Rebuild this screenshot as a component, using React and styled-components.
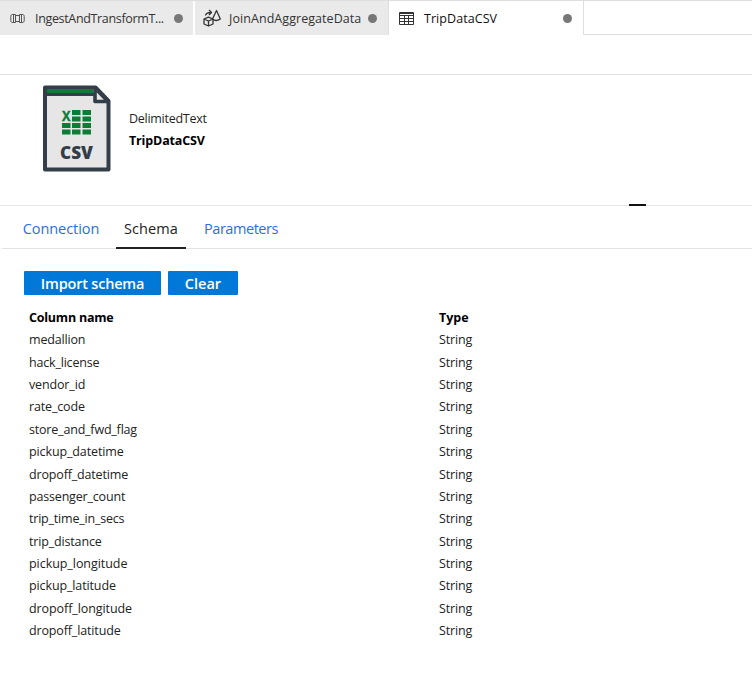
import React from 'react';
import styled, { createGlobalStyle } from 'styled-components';

const GlobalStyle = createGlobalStyle`
  * { box-sizing: border-box; }
  body { margin: 0; background: #fff; }
`;

const Page = styled.div`
  display: flex;
  flex-direction: column;
  width: 752px;
  height: 685px;
  overflow: hidden;
  background: #fff;
  color: #1f1f1f;
  font-family: 'Open Sans', 'Noto Sans', sans-serif;
  font-size: 12.5px;
`;

const Text = styled.span`
  letter-spacing: ${({ $tracking = 0 }) => $tracking}px;
  white-space: nowrap;
`;

const FileTabs = styled.header`
  display: flex;
  height: 35px;
  flex: none;
  border-top: 1px solid #dedede;
`;

const FileTab = styled.div`
  display: flex;
  align-items: center;
  flex: none;
  width: ${({ $width }) => $width}px;
  padding: 0 ${({ $end = 11 }) => $end}px 0 ${({ $inset }) => $inset}px;
  background: ${({ $active }) => ($active ? '#fff' : '#eaeaea')};
  color: ${({ $active }) => ($active ? '#111' : '#333')};
  border-right: ${({ $edge }) => $edge};
`;

const TabIcon = styled.svg`
  flex: none;
  width: ${({ $size }) => $size}px;
  height: ${({ $size }) => $size}px;
  margin-right: ${({ $gap }) => $gap}px;
  fill: none;
  stroke: #333;
`;

const Dot = styled.i`
  flex: none;
  width: 9px;
  height: 9px;
  margin-left: auto;
  border-radius: 50%;
  background: #777;
`;

const TabFiller = styled.div`
  flex: 1;
  border-bottom: 1px solid #dfdfdf;
`;

const Toolbar = styled.div`
  flex: none;
  height: 40px;
  border-bottom: 1px solid #e2e2e2;
`;

const Summary = styled.section`
  display: flex;
  flex: none;
  height: 131px;
  padding: 10px 0 0 42px;
  border-bottom: 1px solid #e6e6e6;
`;

const FileBadge = styled.svg`
  flex: none;
  width: 69px;
  height: 87px;
`;

const SummaryText = styled.div`
  display: flex;
  flex-direction: column;
  margin: 23px 0 0 18px;
  line-height: 22px;
`;

const DatasetName = styled(Text)`
  font-weight: 700;
  color: #000;
`;

const Handle = styled.div`
  align-self: flex-end;
  width: 17px;
  height: 2px;
  margin: 0 106px -1px auto;
  background: #111;
`;

const Sections = styled.nav`
  display: flex;
  flex: none;
  gap: 10px;
  height: 43px;
  margin-left: 2px;
  padding-left: 14px;
  border-bottom: 1px solid #e3e3e3;
`;

const Section = styled.a`
  display: flex;
  align-items: center;
  justify-content: center;
  width: ${({ $width }) => $width}px;
  height: 43px;
  padding-top: 3px;
  border-bottom: 2px solid ${({ $active }) => ($active ? '#222' : 'transparent')};
  color: ${({ $active }) => ($active ? '#222' : '#2b6fdb')};
  font-size: 14.5px;
`;

const Actions = styled.div`
  display: flex;
  flex: none;
  gap: 7px;
  padding: 22px 0 0 24px;
`;

const Button = styled.button`
  width: ${({ $width }) => $width}px;
  height: 24px;
  padding: 0;
  border: 0;
  border-radius: 1px;
  background: #0078d7;
  color: #fff;
  font: 600 14.5px/25px 'Open Sans', 'Noto Sans', sans-serif;
`;

const Table = styled.div`
  display: flex;
  flex-direction: column;
  margin: 12px 0 0 29px;
`;

const Row = styled.div`
  display: grid;
  grid-template-columns: 410px 1fr;
  height: 22.36px;
  line-height: 22.36px;
  font-weight: ${({ $head }) => ($head ? 700 : 400)};
  color: ${({ $head }) => ($head ? '#000' : '#222')};
`;

const columns = [
  ['medallion', -0.18],
  ['hack_license', -0.19],
  ['vendor_id', -0.15],
  ['rate_code', -0.16],
  ['store_and_fwd_flag', -0.19],
  ['pickup_datetime', -0.12],
  ['dropoff_datetime', -0.16],
  ['passenger_count', -0.18],
  ['trip_time_in_secs', -0.2],
  ['trip_distance', -0.16],
  ['pickup_longitude', -0.05],
  ['pickup_latitude', -0.12],
  ['dropoff_longitude', -0.08],
  ['dropoff_latitude', -0.14],
];

const PipelineIcon = () => (
  <TabIcon $size={15} $gap={10} viewBox="0 0 15 15">
    <path stroke="#555" d="M3 3.500h2.500v8H3A1.800 1.800 0 0 1 .8 9.500v-4A1.800 1.800 0 0 1 3 3.500ZM12 3.500H9.500v8H12a1.800 1.800 0 0 0 2.200-2v-4A1.800 1.800 0 0 0 12 3.500ZM3.500 4v7M11.500 4v7M6 4.500h3M6 10.500h3" />
  </TabIcon>
);

const DataFlowIcon = () => (
  <TabIcon $size={18} $gap={8} viewBox="0 0 18 18" strokeWidth="1.300" strokeLinejoin="round">
    <path d="M1 10l4.500-1.800L10 10v5l-4.500 2L1 15ZM1 10l4.500 2L10 10M5.500 12v5M13.500 1.500L9.500 10Q13 13 17.300 10ZM2.500 6.500Q3 3.500 8 3.500M6 1l2.500 2.500L6 6" />
  </TabIcon>
);

const TableIcon = () => (
  <TabIcon $size={15} $gap={10} viewBox="0 0 15 15">
    <path d="M.5 1.500h14v12H.5ZM.5 2.500h14M.5 4.500h14M.5 7.500h14M.5 10.500h14M5.500 4.500v9M9.500 4.500v9" />
  </TabIcon>
);

const CsvIcon = () => (
  <FileBadge viewBox="0 0 69 87">
    <path d="M3 2.500h50.500L66.500 16v68.500H3Z" fill="#e6e6e6" stroke="#333e49" strokeWidth="4" strokeLinejoin="round" />
    <path d="M3 9.500h49" stroke="#333e49" strokeWidth="3" />
    <path d="M5 4h46v4H5Z" fill="#0b7d36" />
    <path d="M53 3v13.500h13Z" fill="#e6e6e6" stroke="#333e49" strokeWidth="3.600" strokeLinejoin="round" />
    <path d="M30 25h8.500v5H30ZM40.500 25H49v5h-8.500ZM30 31.500h8.500v5H30ZM40.500 31.500H49v5h-8.500ZM20 38h8.500v5H20ZM30 38h8.500v5H30ZM40.500 38H49v5h-8.500ZM20 44.500h8.500v5H20ZM30 44.500h8.500v5H30ZM40.500 44.500H49v5h-8.500Z" fill="#0b7d36" />
    <text x="20" y="35.500" fill="#0b7d36" stroke="#0b7d36" strokeWidth=".4" fontFamily="Open Sans, sans-serif" fontWeight="700" fontSize="13.500" textLength="8.500" lengthAdjust="spacingAndGlyphs">X</text>
    <text x="18" y="74" fill="#333e49" fontFamily="Open Sans, sans-serif" fontWeight="800" fontSize="17.500" textLength="33" lengthAdjust="spacingAndGlyphs">CSV</text>
  </FileBadge>
);

export default function App() {
  return (
    <Page>
      <GlobalStyle />
      <FileTabs>
        <FileTab $width={195} $inset={10} $end={10} $edge="2px solid #fff">
          <PipelineIcon />
          <Text $tracking={-0.34}>IngestAndTransformT...</Text>
          <Dot />
        </FileTab>
        <FileTab $width={194} $inset={8} $edge="1px solid #dedede">
          <DataFlowIcon />
          <Text $tracking={0.06}>JoinAndAggregateData</Text>
          <Dot />
        </FileTab>
        <FileTab $active $width={195} $inset={10} $edge="1px solid #dfdfdf">
          <TableIcon />
          <Text $tracking={0.06}>TripDataCSV</Text>
          <Dot />
        </FileTab>
        <TabFiller />
      </FileTabs>
      <Toolbar />
      <Summary>
        <CsvIcon />
        <SummaryText>
          <Text $tracking={-0.27}>DelimitedText</Text>
          <DatasetName $tracking={-0.15}>TripDataCSV</DatasetName>
        </SummaryText>
        <Handle />
      </Summary>
      <Sections>
        <Section $width={90}><Text $tracking={-0.06}>Connection</Text></Section>
        <Section $active $width={70}><Text $tracking={0.08}>Schema</Text></Section>
        <Section $width={90}><Text $tracking={-0.45}>Parameters</Text></Section>
      </Sections>
      <Actions>
        <Button $width={137}><Text $tracking={-0.2}>Import schema</Text></Button>
        <Button $width={70}><Text>Clear</Text></Button>
      </Actions>
      <Table>
        <Row $head>
          <Text $tracking={-0.22}>Column name</Text>
          <Text>Type</Text>
        </Row>
        {columns.map(([name, tracking]) => (
          <Row key={name}>
            <Text $tracking={tracking}>{name}</Text>
            <Text $tracking={-0.15}>String</Text>
          </Row>
        ))}
      </Table>
    </Page>
  );
}
